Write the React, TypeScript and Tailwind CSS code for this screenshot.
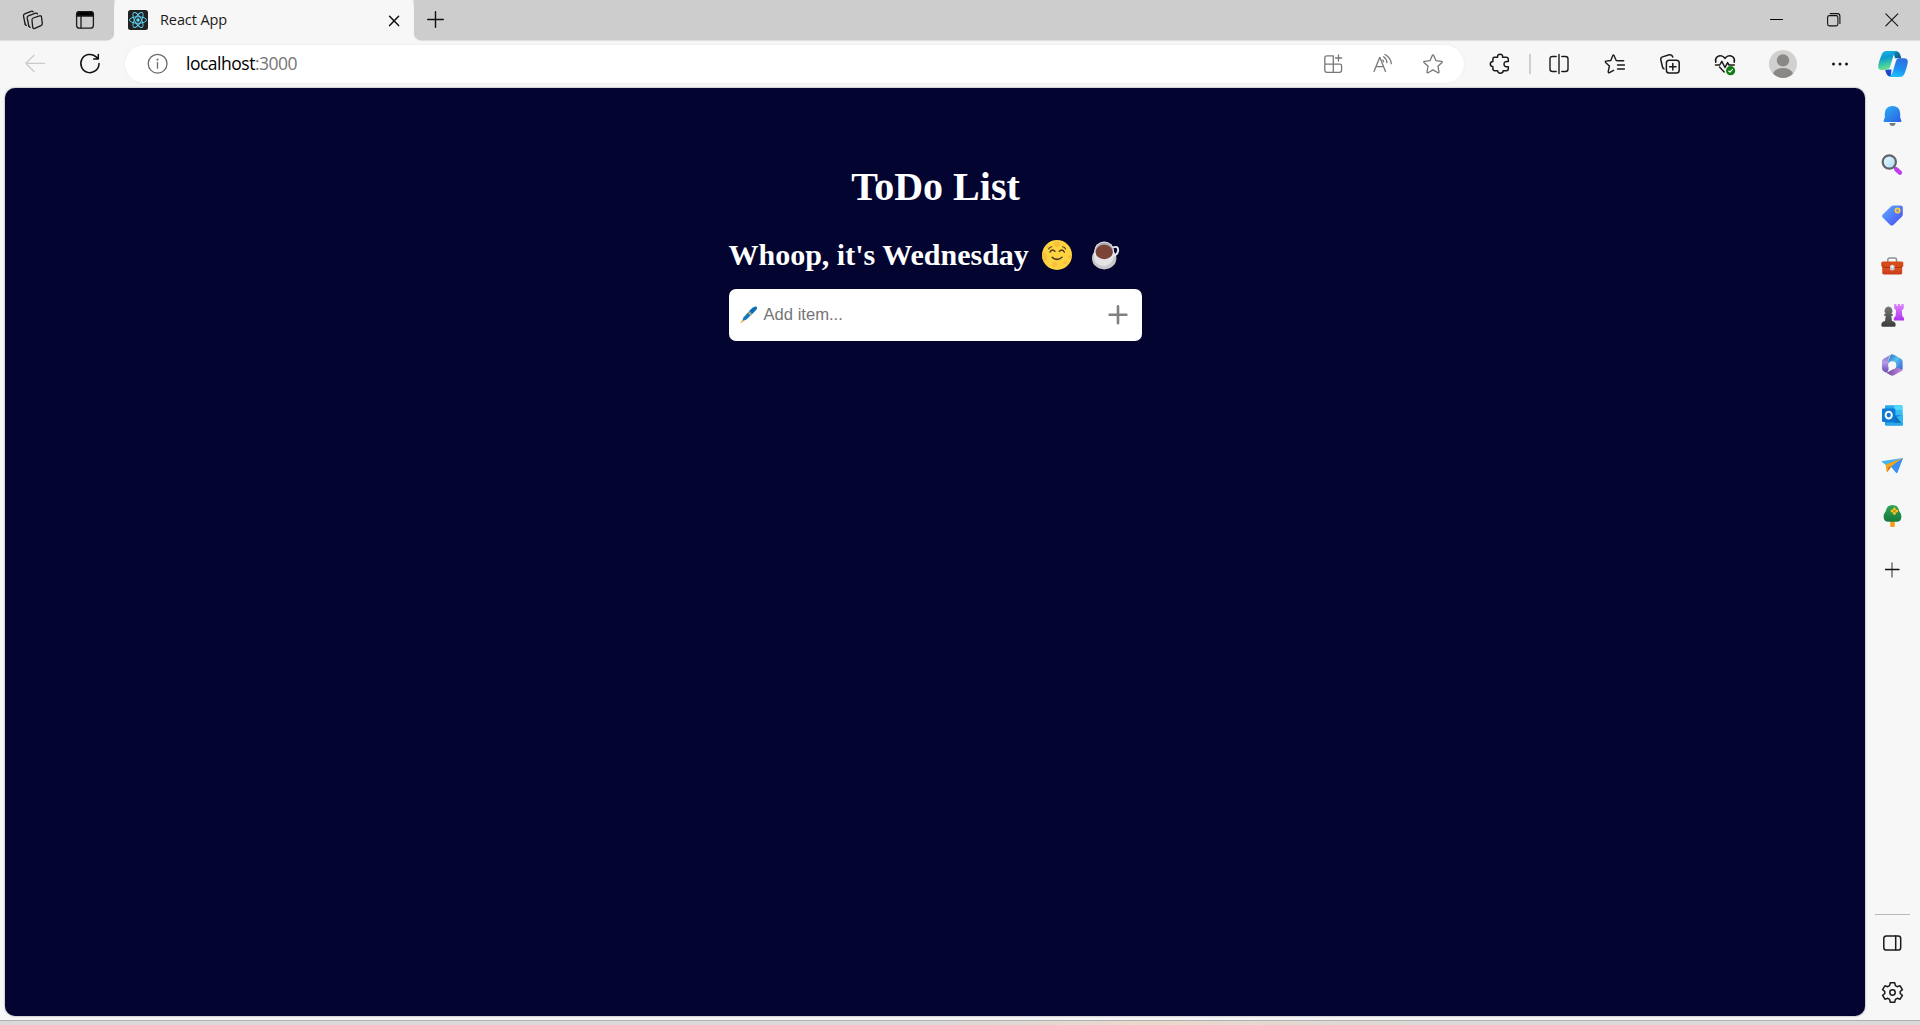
import React from "react";

type IconProps = {
  w?: number;
  h?: number;
  sw?: number;
  className?: string;
  children: React.ReactNode;
};

function Icon({ w = 24, h = 24, sw = 1.3, className = "text-[#1b1b1b]", children }: IconProps) {
  return (
    <svg
      width={w}
      height={h}
      viewBox={`0 0 ${w} ${h}`}
      fill="none"
      stroke="currentColor"
      strokeWidth={sw}
      strokeLinecap="round"
      strokeLinejoin="round"
      className={`block shrink-0 ${className}`}
    >
      {children}
    </svg>
  );
}

const STAR =
  "M12 2.9 Q12.4 2.9 12.7 3.5 L15 8.7 L20.6 9.4 Q21.8 9.6 21 10.4 L16.9 14.2 L18 19.9 Q18.1 21.2 17 20.7 L12 17.9 L7 20.7 Q5.9 21.2 6 19.9 L7.1 14.2 L3 10.4 Q2.2 9.6 3.4 9.4 L9 8.7 L11.3 3.5 Q11.6 2.9 12 2.9Z";

function TabBar() {
  return (
    <div className="flex h-10 shrink-0 bg-[#f7f7f7]">
      <div className="flex w-[114px] items-center rounded-br-lg bg-[#cdcdcd] shadow-[0_0_2px_rgba(0,0,0,0.35)]">
        <Icon className="ml-[20px] text-[#1b1b1b]">
          <path d="M12 12.2 Q11.7 10.6 13.2 10 L19.5 7.9 Q21.2 7.4 21.5 9 L22.3 15.3 Q22.4 17 21 17.6 L14.8 20.4 Q13.1 21 12.7 19.3Z" />
          <path d="M8.8 18 L7.2 10 Q6.9 8.4 8.3 7.8 L15.5 5.2 Q17 4.8 17.5 6" />
          <path d="M5.1 16 L3.5 8 Q3.2 6.4 4.6 5.8 L11.2 3.3 Q12.5 2.9 13.2 3.8" />
          <path d="M8.8 18 Q9.1 19 10.2 19.3 M5.1 16 Q5.5 17.1 6.4 17.4" />
        </Icon>
        <Icon className="ml-[29px] text-[#1b1b1b]">
          <rect x="3.6" y="3.6" width="16.8" height="16.6" rx="3" />
          <path d="M3.6 8 V6.4 Q3.8 3.6 6.4 3.6 H17.6 Q20.2 3.6 20.4 6.4 V8Z" fill="#000" />
          <path d="M8 8 V20" />
        </Icon>
      </div>
      <div className="z-10 flex w-[300px] items-center rounded-t-lg bg-[#f7f7f7] pl-[14px]">
        <svg width="20" height="20" viewBox="0 0 20 20" className="shrink-0">
          <rect width="20" height="20" rx="2.5" fill="#222" />
          <g fill="none" stroke="#61dafb" strokeWidth="0.9">
            <ellipse cx="10" cy="10" rx="8.5" ry="3.3" />
            <ellipse cx="10" cy="10" rx="8.5" ry="3.3" transform="rotate(60 10 10)" />
            <ellipse cx="10" cy="10" rx="8.5" ry="3.3" transform="rotate(120 10 10)" />
          </g>
          <circle cx="10" cy="10" r="1.7" fill="#61dafb" />
        </svg>
        <span className="ml-[12px] w-[228px] text-[14.5px] tracking-[-0.1px] text-[#1b1b1b]">React App</span>
        <Icon w={12} h={12} sw={1.5} className="mt-px text-[#111]">
          <path d="M1.6 1.2 L10.6 10.6 M10.6 1.2 L1.6 10.6" />
        </Icon>
      </div>
      <div className="flex flex-1 items-center rounded-bl-lg bg-[#cdcdcd] shadow-[0_0_2px_rgba(0,0,0,0.35)]">
        <Icon w={18} h={18} sw={1.4} className="ml-[13px] text-[#111]">
          <path d="M8.5 .7 V16.3 M.7 8.5 H16.3" />
        </Icon>
        <Icon w={13} h={2} sw={1} className="ml-auto text-black">
          <path d="M.5 .5 H12.5" />
        </Icon>
        <Icon w={14} h={14} sw={1.1} className="ml-[44px] text-[#111]">
          <rect x=".6" y="2.6" width="10.3" height="10.3" rx="1.8" />
          <path d="M3.2 .6 H10.4 Q12.9 .6 12.9 3.2 V10.4" />
        </Icon>
        <Icon w={14} h={14} sw={1.1} className="ml-[44px] mr-[21px] text-[#111]">
          <path d="M.8 .8 L12.8 12.8 M12.8 .8 L.8 12.8" />
        </Icon>
      </div>
    </div>
  );
}

function Copilot() {
  return (
    <svg width="32" height="28" viewBox="0 0 32 28" className="block">
      <defs>
        <linearGradient id="cpA" x1="0" y1="0" x2="0.2" y2="1">
          <stop offset="0" stopColor="#1bb3e8" />
          <stop offset="0.4" stopColor="#0a9bd3" />
          <stop offset="0.7" stopColor="#35c3a9" />
          <stop offset="1" stopColor="#6fe08f" />
        </linearGradient>
        <linearGradient id="cpB" x1="0.6" y1="0" x2="0.3" y2="1">
          <stop offset="0" stopColor="#2f6fe0" />
          <stop offset="0.5" stopColor="#1e8cf0" />
          <stop offset="1" stopColor="#1cc0fb" />
        </linearGradient>
        <linearGradient id="cpC" x1="0" y1="0" x2="1" y2="1">
          <stop offset="0" stopColor="#0f94bd" />
          <stop offset="1" stopColor="#114d86" />
        </linearGradient>
      </defs>
      <path d="M16 1 H19 Q22 1.3 23 4 L24.3 8.3 H18Z" fill="url(#cpC)" />
      <path d="M8 19.6 H14.5 L13.8 26.6 Q10.5 26.5 9.5 24Z" fill="#1b49d6" />
      <path d="M9.5 1 H19.7 Q17.4 2 16.3 6.3 L13.2 16.5 Q12.2 20.1 8.3 20.1 H4.3 Q.8 19.8 1.2 15.5 Q2.5 9.5 4.8 4.2 Q6.3 1.1 9.5 1Z" fill="url(#cpA)" />
      <path d="M22.3 8.2 H27.6 Q31.2 8.8 30.8 12.5 Q29.8 18 27.6 23.5 Q26.3 26.9 22.6 27 H11.8 Q14.7 25.8 15.7 22 L18.8 11.5 Q19.5 8.5 22.3 8.2Z" fill="url(#cpB)" />
    </svg>
  );
}

function Toolbar() {
  return (
    <div className="flex h-12 shrink-0 items-center">
      <Icon w={22} h={24} className="ml-[24px] text-[#cbcbcb]">
        <path d="M1.8 11.3 H20.5 M10 3.2 L1.8 11.3 L10 19.5" />
      </Icon>
      <Icon sw={1.5} className="ml-[32px] text-[#111]">
        <path d="M21 11.5 A9.1 9.1 0 1 1 17.8 4.6 L20 6.8 M20.3 2.4 V7 H15.7" />
      </Icon>
      <div className="ml-[23px] flex h-[38px] w-[1339px] items-center rounded-full bg-white shadow-[0_0_3px_rgba(0,0,0,0.07)]">
        <Icon className="ml-[21px] text-[#6b6b6b]">
          <circle cx="11.6" cy="11.7" r="9.4" />
          <path d="M11.5 10.7 V16.2" />
          <circle cx="11.5" cy="7.6" r=".4" fill="currentColor" />
        </Icon>
        <span className="mb-px ml-[16px] flex-1 text-[17.5px] tracking-[-0.49px] text-black">
          localhost<span className="text-[#767676]">:3000</span>
        </span>
        <Icon className="mr-[26px] text-[#777]">
          <path d="M12.3 3.9 H6 Q3.8 3.9 3.8 6 V18 Q3.8 20.3 6 20.3 H18.4 Q20.6 20.3 20.6 18 V14 Q20.6 12.2 18.8 12.2 H3.8 M12.3 3.9 V20.3 M17.5 3 V9 M14.5 6 H20.7" />
        </Icon>
        <Icon className="mr-[26px] text-[#777]">
          <path d="M3 19.5 L8.8 5.3 L14.5 19.5 M5 14.6 H12.6 M12.6 4.8 Q15.8 7 15.9 10.7 M14 2.5 Q19.7 5.6 20.3 11.7" />
          <path d="M11.7 8.1 Q12.5 8.8 12.6 9.8" />
        </Icon>
        <Icon className="mr-[19px] text-[#777]">
          <path d={STAR} />
        </Icon>
      </div>
      <div className="ml-[6px] flex w-[59px] justify-center">
        <Icon sw={1.5} className="text-[#1b1b1b]">
          <path d="M6.3 5.3 H9.6 Q9.2 2.3 12.2 2.3 Q15 2.3 14.6 5.3 H18.2 Q20.3 5.3 20.3 7.5 V9.5 Q16 8.9 16 12.1 Q16 15.2 20.3 14.7 V16.8 Q20.3 18.8 18.2 18.8 H15.2 Q15.2 21.2 12.3 21.2 Q9.8 21.2 9.6 18.8 H7 Q4.9 18.8 4.9 16.8 V14.7 Q2.3 14.5 2.3 12.1 Q2.3 9.7 4.9 9.4 V7 Q4.9 5.3 6.3 5.3Z" />
        </Icon>
      </div>
      <div className="h-5 w-[2px] bg-[#cfcfcf]" />
      <div className="flex w-[55px] justify-center">
        <Icon sw={1.4}>
          <path d="M9.2 4.5 H5.5 Q3 4.5 3 7 V17 Q3 19.5 5.5 19.5 H9.2 M14.8 4.5 H18.5 Q21 4.5 21 7 V17 Q21 19.5 18.5 19.5 H14.8 M12 2.5 V21.5" />
        </Icon>
      </div>
      <div className="ml-px flex w-[56px] justify-center">
        <Icon sw={1.4}>
          <path d="M20.7 8.8 H15.7 L13.2 8.5 L11 3.5 Q10.4 2.5 9.8 3.5 L7.8 8.5 L3 9.1 Q1.8 9.4 2.6 10.4 L6.4 14 L5.2 19.7 Q5.2 21 6.4 20.6 L10.6 18.3 M14.5 13 H21.4 M14.5 17 H21.4" />
        </Icon>
      </div>
      <div className="flex w-[54px] justify-center">
        <Icon sw={1.5}>
          <rect x="8.4" y="8.3" width="12.8" height="12.8" rx="2.8" />
          <path d="M14.8 11.5 V18 M11.6 14.7 H18 M6 16.9 Q4.8 16.4 4.5 15 L2.8 7.8 Q2.4 5.6 4.5 4.9 L11.3 2.8 Q14 2.3 14.8 5" />
        </Icon>
      </div>
      <div className="flex w-[56px] justify-center">
        <Icon sw={1.5}>
          <path d="M2.8 10.3 Q1.8 7 4.2 4.8 Q7.8 2.3 11 5.3 L12 6.4 L13 5.3 Q16.2 2.3 19.8 4.8 Q22.2 7 21.2 10.3 M2.5 13 H6.7 L8.8 9.3 L12 15.5 L14.6 10.6 L16 13 H21.3 M6.5 15 L11.2 20" />
          <circle cx="17.6" cy="18.7" r="4.6" fill="#107c10" stroke="none" />
          <path d="M15.7 19 L17 20.2 L19.5 17.4" stroke="#fff" strokeWidth="1.1" />
        </Icon>
      </div>
      <div className="flex w-[60px] justify-center">
        <svg width="28" height="28" viewBox="0 0 28 28">
          <circle cx="14" cy="14" r="14" fill="#d2d0ce" />
          <circle cx="14" cy="10.4" r="6.2" fill="#8a8886" />
          <path d="M4 23.6 Q6.2 17.9 14 17.9 Q21.8 17.9 24 23.6 Q20 28 14 28 Q8 28 4 23.6Z" fill="#8a8886" />
        </svg>
      </div>
      <div className="flex w-[54px] justify-center">
        <Icon w={18} h={4}>
          <g fill="#1b1b1b" stroke="none">
            <circle cx="2.5" cy="2" r="1.5" />
            <circle cx="9" cy="2" r="1.5" />
            <circle cx="15.5" cy="2" r="1.5" />
          </g>
        </Icon>
      </div>
      <div className="flex w-[52px] justify-center">
        <Copilot />
      </div>
    </div>
  );
}

function SideSlot({ children }: { children: React.ReactNode }) {
  return <div className="flex h-[50px] shrink-0 items-center justify-center">{children}</div>;
}

function Sidebar() {
  return (
    <aside className="flex w-[55px] shrink-0 flex-col pl-px pt-[3px]">
      <SideSlot>
        <svg width="24" height="24" viewBox="0 0 24 24">
          <defs>
            <linearGradient id="bell" x1="0" y1="0" x2="1" y2="1">
              <stop offset="0" stopColor="#29b0f4" />
              <stop offset="1" stopColor="#2b5fe3" />
            </linearGradient>
          </defs>
          <path d="M8.3 19 H14.7 Q14 22 11.5 22 Q9 22 8.3 19Z" fill="#707a84" />
          <path d="M11.5 2 Q18.8 2.2 19.2 9.3 V13.6 L20.4 16.7 Q20.6 18 19.4 18.1 H3.6 Q2.4 18 2.6 16.7 L3.8 13.6 V9.3 Q4.2 2.2 11.5 2Z" fill="url(#bell)" />
        </svg>
      </SideSlot>
      <SideSlot>
        <svg width="24" height="24" viewBox="0 0 24 24">
          <defs>
            <linearGradient id="glass" x1="0" y1="0" x2="1" y2="1">
              <stop offset="0" stopColor="#ecf8ff" />
              <stop offset="1" stopColor="#a9dcfb" />
            </linearGradient>
          </defs>
          <path d="M13 13 L15.5 15.3" stroke="#777" strokeWidth="2.4" />
          <path d="M15.3 15.3 L18.9 18.7" stroke="#bd3df0" strokeWidth="4.4" strokeLinecap="round" />
          <circle cx="8.3" cy="8" r="6.6" fill="url(#glass)" stroke="#62666a" strokeWidth="2.2" />
        </svg>
      </SideSlot>
      <SideSlot>
        <svg width="24" height="24" viewBox="0 0 24 24">
          <defs>
            <linearGradient id="tag" x1="0" y1="0" x2="1" y2="1">
              <stop offset="0" stopColor="#5eb1ff" />
              <stop offset="0.5" stopColor="#517cfa" />
              <stop offset="1" stopColor="#4f49e8" />
            </linearGradient>
          </defs>
          <path d="M12.5 1.4 H19.7 Q21.7 1.4 21.8 3.3 V10.3 Q21.8 11.5 21 12.4 L12.4 20.9 Q10.8 22.3 9.2 20.9 L1.7 13.6 Q.3 12 1.7 10.4 L10.2 2.2 Q11.2 1.4 12.5 1.4Z" fill="url(#tag)" />
          <circle cx="16.5" cy="6.6" r="2.2" fill="#7f91d8" stroke="#ffd02e" strokeWidth="1.6" />
        </svg>
      </SideSlot>
      <SideSlot>
        <svg width="24" height="24" viewBox="0 0 24 24">
          <defs>
            <linearGradient id="box" x1="0" y1="0" x2="0" y2="1">
              <stop offset="0" stopColor="#ef6b2d" />
              <stop offset="1" stopColor="#c73a17" />
            </linearGradient>
          </defs>
          <path d="M6.8 8 V6 Q6.9 4 8.8 4 H13.6 Q15.5 4 15.6 6 V8" fill="none" stroke="#8c9196" strokeWidth="1.5" />
          <rect x="1.2" y="8" width="20" height="12.4" rx="1.7" fill="url(#box)" />
          <path d="M1.6 7.6 H20.8 Q22.6 8 22.4 10 Q22 13.3 18.5 13.5 H4 Q.5 13.3 .1 10 Q0 8 1.6 7.6Z" fill="#d64b18" />
          <path d="M.4 11.5 Q1.3 13.5 4 13.5 H18.5 Q21.2 13.5 22.1 11.5" fill="none" stroke="#a72f0f" strokeWidth="1" />
          <rect x="9" y="10.8" width="4.6" height="5.6" rx="1.6" fill="#c4c7c9" />
          <circle cx="11.3" cy="12.8" r="1.1" fill="#fff" />
        </svg>
      </SideSlot>
      <SideSlot>
        <svg width="24" height="24" viewBox="0 0 24 24">
          <defs>
            <linearGradient id="pawn" x1="0" y1="0" x2="0" y2="1">
              <stop offset="0" stopColor="#777" />
              <stop offset="1" stopColor="#3c3c3c" />
            </linearGradient>
            <linearGradient id="rook" x1="0" y1="0" x2="0" y2="1">
              <stop offset="0" stopColor="#dd86ff" />
              <stop offset="1" stopColor="#ad32ee" />
            </linearGradient>
          </defs>
          <path d="M13.2 0 H15.4 V1.8 H16.8 V0 H19 V1.8 H20.4 V0 H22.7 V4.5 L20.8 6.2 L21.3 12 L23 14 V16.4 H12.8 V14 L14.6 12 L15 6.2 L13.2 4.5Z" fill="url(#rook)" />
          <path d="M7.5 2.6 A4 4 0 0 1 10.2 9.5 Q12 9.6 12 11 Q12 12 10.3 12 L11 17 Q14.6 18 14.6 20.2 V21.4 Q14.6 22.8 13.2 22.8 H1.8 Q.4 22.8 .4 21.4 V20.2 Q.4 18 4 17 L4.7 12 Q3 12 3 11 Q3 9.6 4.8 9.5 A4 4 0 0 1 7.5 2.6Z" fill="url(#pawn)" />
        </svg>
      </SideSlot>
      <SideSlot>
        <svg width="24" height="24" viewBox="0 0 24 24">
          <defs>
            <linearGradient id="mA" x1="0" y1="0" x2="0" y2="1">
              <stop offset="0" stopColor="#7a73cf" />
              <stop offset="0.45" stopColor="#b79be6" />
              <stop offset="1" stopColor="#6a4cb4" />
            </linearGradient>
            <linearGradient id="mB" x1="0" y1="0" x2="1" y2="1">
              <stop offset="0" stopColor="#2c66b8" />
              <stop offset="0.45" stopColor="#55c0ee" />
              <stop offset="1" stopColor="#3b58d0" />
            </linearGradient>
            <linearGradient id="mC" x1="0" y1="0" x2="1" y2="0">
              <stop offset="0" stopColor="#6b489f" />
              <stop offset="1" stopColor="#c78ade" />
            </linearGradient>
          </defs>
          <path d="M9.7 .7 Q11.3 -.2 13 .7 L20 4.7 Q21.6 5.6 21.6 7.5 V14.4 Q21.6 16.3 20 17.2 L14.6 13.5 V9 L6.5 9Z" fill="url(#mB)" />
          <path d="M9.7 .7 Q7.6 2.2 7.6 6 V15.6 Q7.3 18.4 4.4 18.2 L2.6 17.2 Q1 16.2 1 14.4 V7.5 Q1 5.7 2.6 4.7Z" fill="url(#mA)" />
          <path d="M4.2 18.1 Q6.4 18.4 8.4 17.2 L14.6 13.6 L21.4 15.4 Q21 16.6 20 17.2 L13 21.3 Q11.3 22.2 9.6 21.3Z" fill="url(#mC)" />
          <circle cx="11.3" cy="11.2" r="4" fill="#f7f7f7" />
        </svg>
      </SideSlot>
      <SideSlot>
        <svg width="24" height="24" viewBox="0 0 24 24">
          <rect x="4" y="1.3" width="17.4" height="13" rx="1.2" fill="#28a8ea" />
          <path d="M13 1.3 H20.2 Q21.4 1.3 21.4 2.5 V7 H13Z" fill="#50d9ff" />
          <rect x="13" y="6" width="8.4" height="5" fill="#38bdf2" />
          <path d="M4 11 H21.8 V20.5 Q21.8 21.6 20.6 21.6 H5 Q4 21.6 4 20.5Z" fill="#1493df" />
          <path d="M14 14 L21.8 10.5 V20.5Z" fill="#35b8f1" />
          <path d="M13 10 L21.8 20.5 H13Z" fill="#0f6fb8" />
          <path d="M5 21.6 L21.8 21.6 V18.8 H4Z" fill="#28a8ea" />
          <rect x="1" y="4.5" width="13.4" height="13.4" rx="1.2" fill="#0f78d4" />
          <ellipse cx="7.7" cy="11.1" rx="3.1" ry="3.4" fill="none" stroke="#fff" strokeWidth="1.9" />
        </svg>
      </SideSlot>
      <SideSlot>
        <svg width="24" height="24" viewBox="0 0 24 24">
          <path d="M.2 7.2 L21.9 3.9 L5.4 11.5Z" fill="#41b2f2" />
          <path d="M9.5 11.2 L21.9 3.9 L16.3 18.4 Q15.8 19.4 15 18.5Z" fill="#2e83ee" />
          <path d="M4.6 10.5 L21.9 3.9 L9.8 13.3 L6 18.2 Q5.5 18 5.4 16.6Z" fill="#f5a51d" />
          <path d="M9.8 12.6 L21.9 3.9 L16.3 18.4 Q15.8 19.4 15 18.5Z" fill="#3a8ff2" />
          <path d="M6 18.2 L9.8 13.3 L8.2 12.2Z" fill="#c66b08" />
        </svg>
      </SideSlot>
      <SideSlot>
        <svg width="24" height="24" viewBox="0 0 24 24">
          <defs>
            <linearGradient id="tree" x1="0" y1="0" x2="0" y2="1">
              <stop offset="0" stopColor="#31a452" />
              <stop offset="1" stopColor="#14793e" />
            </linearGradient>
          </defs>
          <rect x="9.2" y="15" width="4.6" height="8" rx="1" fill="#f49d1b" />
          <path d="M11.5 1 Q17.3 1.2 18 6.7 Q20.4 9.5 20.4 12.7 Q20.2 17.6 15.8 17.8 H7.2 Q2.8 17.6 2.6 12.7 Q2.6 9.5 5 6.7 Q5.7 1.2 11.5 1Z" fill="url(#tree)" />
          <g fill="#ffc51f">
            <circle cx="13.4" cy="4.9" r="1.5" />
            <circle cx="15.6" cy="7.1" r="1.5" />
            <circle cx="13.4" cy="9.3" r="1.5" />
            <circle cx="11.2" cy="7.1" r="1.5" />
          </g>
          <circle cx="13.4" cy="7.1" r="1.1" fill="#e8810a" />
        </svg>
      </SideSlot>
      <div className="mt-[4px] flex h-[50px] items-center justify-center">
        <Icon w={16} h={16} sw={1.4} className="text-[#111]">
          <path d="M7 1 V15" stroke="#666" />
          <path d="M.2 7.5 H14" />
        </Icon>
      </div>
      <div className="mt-auto mb-[2px]">
        <div className="ml-[9px] h-px w-[35px] bg-[#b8b8b8]" />
        <div className="mt-[3px]">
          <SideSlot>
            <Icon sw={1.5}>
              <rect x="2.8" y="5" width="16.9" height="14" rx="2.6" />
              <path d="M14.7 5 V19" />
            </Icon>
          </SideSlot>
          <SideSlot>
            <Icon sw={1.5}>
              <circle cx="11.5" cy="11.5" r="2.7" />
              <path d="M9.3 1.7 H13.7 L14.4 4.6 L16.2 5.7 L19.1 4.8 L21.4 8.6 L19.2 10.5 V12.5 L21.4 14.4 L19.1 18.2 L16.2 17.3 L14.4 18.4 L13.7 21.3 H9.3 L8.6 18.4 L6.8 17.3 L3.9 18.2 L1.6 14.4 L3.8 12.5 V10.5 L1.6 8.6 L3.9 4.8 L6.8 5.7 L8.6 4.6Z" />
            </Icon>
          </SideSlot>
        </div>
      </div>
    </aside>
  );
}

function MoonFace() {
  return (
    <svg width="30" height="30" viewBox="0 0 30 30" className="shrink-0">
      <circle cx="15" cy="15" r="15" fill="#fdd440" />
      <g fill="#f8bf3c">
        <circle cx="15" cy="4.3" r="2.7" />
        <path d="M.6 12 Q4.7 12.8 5.3 17 Q5 21 1.8 21.5 Q-.8 17 .6 12Z" />
        <circle cx="12.7" cy="24.4" r="2.6" />
        <circle cx="23.3" cy="22.5" r="1.8" />
        <circle cx="27.3" cy="16.5" r="1.6" />
        <circle cx="5.5" cy="7" r="1.3" />
      </g>
      <g fill="none" stroke="#4a3524" strokeWidth="1.5" strokeLinecap="round">
        <path d="M8 12 Q10 8.3 12.9 11.3 M17.4 11.3 Q20.3 8.3 22.3 12" />
        <path d="M10.2 17.3 Q15.2 21.4 20 17.3" />
        <path d="M6.7 9 Q7.5 6.8 9.8 6.7 M20.5 6.7 Q22.8 6.8 23.5 9" strokeWidth="1.1" />
      </g>
    </svg>
  );
}

function CoffeeCup() {
  return (
    <svg width="30" height="30" viewBox="0 0 30 30" className="shrink-0">
      <ellipse cx="13.2" cy="18.2" rx="12.2" ry="11.2" fill="#c9c9cb" />
      <path d="M22 7.4 Q27.2 5.5 27.2 10.5 Q26.5 15.5 20.5 16.5" fill="none" stroke="#ececee" strokeWidth="2" />
      <path d="M3.8 9.5 Q1.8 17 4.5 21.7 Q7.8 26 13.2 26 Q18.6 25.7 21.4 21 Q23.3 15 22.6 9.5Z" fill="#e3e3e6" />
      <ellipse cx="13.2" cy="10.4" rx="9.8" ry="8.8" fill="#ededf0" />
      <ellipse cx="13.2" cy="10.7" rx="8.8" ry="8.1" fill="#a8a8ab" />
      <ellipse cx="13.2" cy="12" rx="8.6" ry="7.2" fill="#7b4437" />
    </svg>
  );
}

function TodoPage() {
  return (
    <main className="flex flex-1 flex-col items-center rounded-[10px] bg-[#030430] shadow-[0_0_2px_rgba(0,0,0,0.5)]">
      <h1 className="mt-[76px] pl-px font-['Liberation_Serif',serif] text-[40px] leading-[46px] font-bold text-white">
        ToDo List
      </h1>
      <div className="mt-[24px] flex w-[413px] items-center">
        <h2 className="w-[313px] font-['Liberation_Serif',serif] text-[30px] leading-[42px] font-bold whitespace-nowrap text-white">
          Whoop, it's Wednesday
        </h2>
        <MoonFace />
        <span className="w-[19px]" />
        <CoffeeCup />
      </div>
      <form className="mt-[13px] flex h-[52px] w-[413px] items-center rounded-[7px] bg-white">
        <svg width="18" height="18" viewBox="0 0 18 18" className="ml-[11px] shrink-0">
          <path d="M15.2 .5 Q16.8 .3 17.1 1.8 Q17 3.3 15.8 4.3 L12.3 8 L9 5 L12.5 1.8Z" fill="#0b6fb8" />
          <path d="M9 5.3 L12.2 8.1 L6.5 13.6 L3 15 L2.5 14.3 L3.6 11.2Z" fill="#1478bd" />
          <path d="M8.8 5.9 L11.5 8.5 L10.6 9.4 L7.8 6.8Z" fill="#f0b43c" />
          <path d="M.3 17.4 L2.6 13.2 L4.4 14.8Z" fill="#d9a441" />
        </svg>
        <span className="ml-[6px] flex-1 font-['Liberation_Sans',Arial,sans-serif] text-[16.6px] text-[#757575]">
          Add item...
        </span>
        <Icon w={20} h={20} sw={2.6} className="mr-[14px] text-[#808080]">
          <path d="M10 1.4 V18.2 M1.6 9.8 H18.4" />
        </Icon>
      </form>
    </main>
  );
}

export default function App() {
  return (
    <div className="flex h-[1025px] w-[1920px] flex-col overflow-hidden bg-[#f7f7f7] font-['Open_Sans','Noto_Sans',sans-serif]">
      <TabBar />
      <Toolbar />
      <div className="flex h-[932px] shrink-0">
        <div className="flex w-[1865px] pb-[4px] pl-[5px]">
          <TodoPage />
        </div>
        <Sidebar />
      </div>
      <div className="h-px bg-[#b0b0b0]" />
      <div className="flex-1 bg-linear-to-r from-[#dadada] from-48% via-[#ecd9cc] via-60% to-[#dadad8] to-74%" />
    </div>
  );
}
